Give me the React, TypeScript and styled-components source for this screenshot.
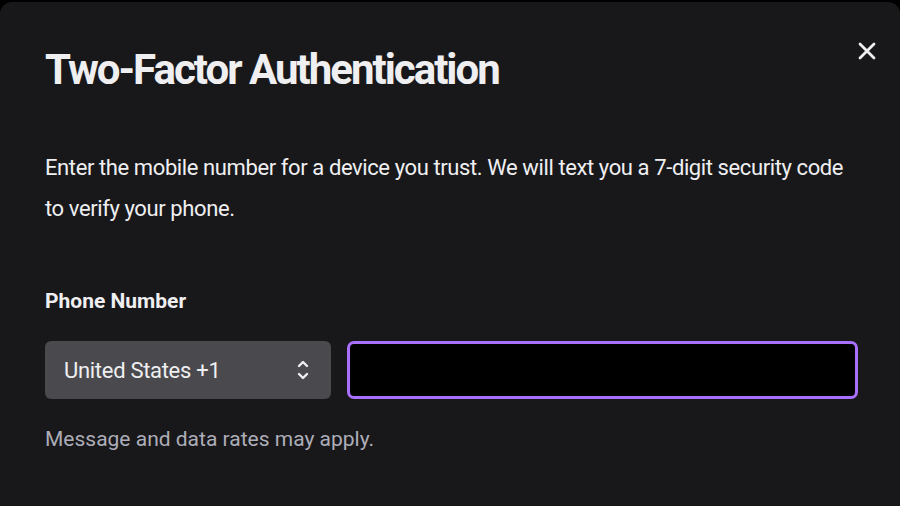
import React from "react";
import styled, { createGlobalStyle } from "styled-components";

const GlobalStyle = createGlobalStyle`
  html, body {
    margin: 0;
    padding: 0;
    background: #000;
  }
  body {
    font-family: "Roboto", "Liberation Sans", sans-serif;
    color: #efeff1;
  }
`;

const Modal = styled.div`
  margin-top: 2px;
  width: 900px;
  height: 504px;
  box-sizing: border-box;
  background: #18181b;
  border-radius: 12px 12px 0 0;
  padding: 36px 22px 0 45px;
`;

const Header = styled.div`
  display: flex;
  align-items: flex-start;
  justify-content: space-between;
`;

const Title = styled.h1`
  margin: 0;
  font-size: 42px;
  line-height: 64px;
  font-weight: 700;
  color: #efeff1;
  letter-spacing: -2px;
`;

const CloseButton = styled.button`
  background: none;
  border: none;
  padding: 0;
  margin-top: 2px;
  width: 22px;
  height: 22px;
  display: flex;
  align-items: center;
  justify-content: center;
  cursor: pointer;
`;

const Intro = styled.p`
  margin: 45px 0 0;
  font-size: 22px;
  line-height: 41px;
  letter-spacing: -0.4px;
  color: #efeff1;
  max-width: 815px;
`;

const Label = styled.div`
  margin-top: 59px;
  font-size: 21px;
  font-weight: 700;
  color: #efeff1;
  line-height: 26px;
`;

const Row = styled.div`
  margin-top: 27px;
  display: flex;
  gap: 16px;
  padding-right: 20px;
`;

const Select = styled.div`
  width: 286px;
  height: 58px;
  box-sizing: border-box;
  background: #4a4a4e;
  border-radius: 6px;
  display: flex;
  align-items: center;
  justify-content: space-between;
  padding: 0 22px 0 19px;
  font-size: 22px;
  letter-spacing: -0.3px;
  color: #efeff1;
`;

const PhoneInput = styled.input`
  flex: 1;
  height: 58px;
  box-sizing: border-box;
  background: #000;
  border: 3px solid #a970ff;
  border-radius: 7px;
  outline: none;
  color: #efeff1;
  font-size: 22px;
  padding: 0 14px;
`;

const Hint = styled.div`
  margin-top: 27px;
  font-size: 21px;
  line-height: 26px;
  color: #adadb8;
`;

export default function App() {
  return (
    <>
      <GlobalStyle />
      <Modal>
        <Header>
          <Title>Two-Factor Authentication</Title>
          <CloseButton aria-label="Close">
            <svg width="18" height="18" viewBox="0 0 18 18">
              <path
                d="M2 2 L16 16 M16 2 L2 16"
                stroke="#efeff1"
                strokeWidth="2.8"
                strokeLinecap="round"
              />
            </svg>
          </CloseButton>
        </Header>
        <Intro>
          Enter the mobile number for a device you trust. We will text you a
          7-digit security code to verify your phone.
        </Intro>
        <Label>Phone Number</Label>
        <Row>
          <Select>
            <span>United States +1</span>
            <svg width="12" height="24" viewBox="0 0 12 24">
              <path
                d="M2 8 L6 4 L10 8 M2 16 L6 20 L10 16"
                stroke="#efeff1"
                strokeWidth="2.4"
                fill="none"
                strokeLinecap="round"
                strokeLinejoin="round"
              />
            </svg>
          </Select>
          <PhoneInput type="tel" />
        </Row>
        <Hint>Message and data rates may apply.</Hint>
      </Modal>
    </>
  );
}
